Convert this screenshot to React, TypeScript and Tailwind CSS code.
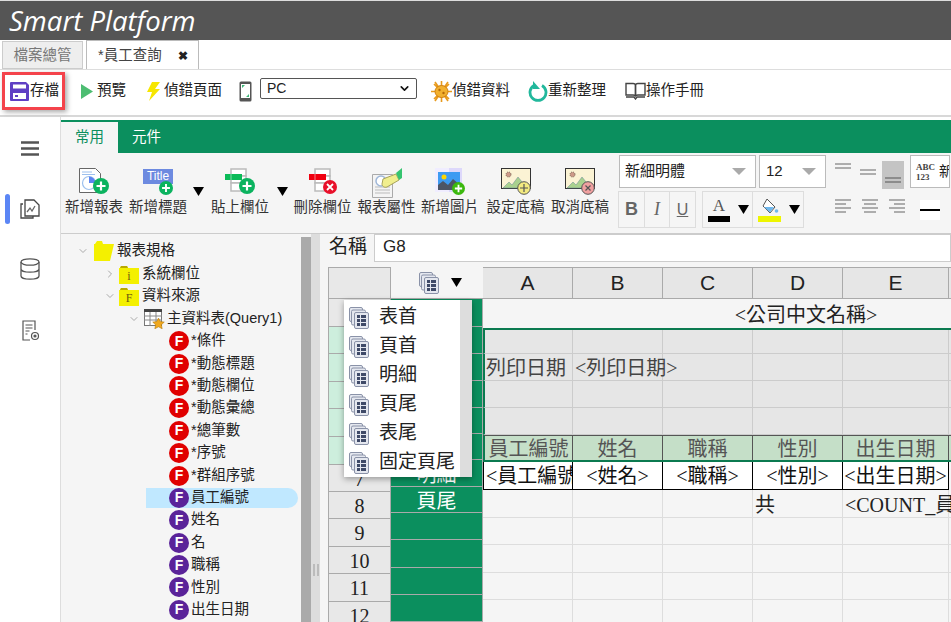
import { ChevronDown, ChevronRight } from "lucide-react";

const Arrow = () => (
  <svg width="11" height="9" viewBox="0 0 11 9"><path d="M0 0h11L5.5 9z" fill="#000" /></svg>
);

const SaveIcon = () => (
  <svg width="19" height="19" viewBox="0 0 19 19">
    <path d="M1 0h15l3 3v15a1 1 0 0 1-1 1H1a1 1 0 0 1-1-1V1a1 1 0 0 1 1-1z" fill="#5f3fc4" />
    <rect x="3" y="2.500" width="13" height="4" fill="#fff" />
    <rect x="3" y="11" width="13" height="6" fill="#fff" />
    <rect x="5" y="13" width="3" height="2" fill="#5f3fc4" />
  </svg>
);

const BugIcon = () => (
  <svg width="21" height="21" viewBox="0 0 21 21">
    <g stroke="#e89a1c" strokeWidth="1.6">
      <path d="M3 3l15 15M18 3L3 18M0 10.5h21M10.5 0v21M4 1l13 19M17 1L4 20" />
    </g>
    <ellipse cx="10.5" cy="10.5" rx="6.5" ry="6" fill="#f2b02e" stroke="#d07f10" />
    <circle cx="8.5" cy="9" r="1.2" fill="#b56a08" />
    <circle cx="12.5" cy="12" r="1.2" fill="#b56a08" />
  </svg>
);

const BookIcon = () => (
  <svg width="21" height="18" viewBox="0 0 21 18" fill="none" stroke="#444" strokeWidth="1.4">
    <path d="M1 1.5h7c1.5 0 2.5 1 2.5 2v11c0-1-1-1.5-2.5-1.5H1z" />
    <path d="M20 1.5h-7c-1.500 0-2.500 1-2.500 2v11c0-1 1-1.500 2.500-1.500h7z" />
    <path d="M1 15h8l1.500 2 1.500-2h8" />
  </svg>
);

const PlusBadge = ({ size = 16, fill = "#0bb35f" }: { size?: number; fill?: string }) => (
  <svg width={size} height={size} viewBox="0 0 16 16" className="absolute right-0 bottom-0">
    <circle cx="8" cy="8" r="8" fill={fill} />
    <path d="M8 3.500v9M3.500 8h9" stroke="#fff" strokeWidth="2.200" />
  </svg>
);

const CrossBadge = ({ fill = "#e8102a" }: { fill?: string }) => (
  <svg width="14" height="14" viewBox="0 0 14 14" className="absolute right-0 bottom-0">
    <circle cx="7" cy="7" r="7" fill={fill} />
    <path d="M4 4l6 6M10 4l-6 6" stroke="#fff" strokeWidth="1.800" />
  </svg>
);

const FieldBars = ({ color }: { color: string }) => (
  <svg width="22" height="25" viewBox="0 0 22 25" className="absolute left-0 top-0">
    <g fill="#fff" stroke="#bbb" strokeWidth="1.500">
      <rect x="6" y="1" width="15" height="7" />
      <rect x="6" y="8" width="15" height="7" />
      <rect x="6" y="15" width="15" height="8" />
    </g>
    <rect x="0" y="6" width="17" height="6" fill={color} />
    <path d="M6 6v6" stroke="#fff" strokeWidth="0.500" />
  </svg>
);

const NewReport = () => (
  <div className="relative w-[30px] h-[26px]">
    <svg width="22" height="25" viewBox="0 0 22 25" className="absolute left-0 top-0">
      <path d="M.5.500h16l5 5v19H.500z" fill="#fff" stroke="#666" />
      <path d="M3 4h10M3 6.500h13" stroke="#9cc0ee" />
      <circle cx="10" cy="15" r="6.500" fill="#fff" stroke="#9cc0ee" strokeWidth="1.200" />
      <path d="M10 8.500a6.500 6.500 0 0 1 6.500 6.500H10z" fill="#5b84f0" />
    </svg>
    <PlusBadge />
  </div>
);

const NewTitle = () => (
  <div className="relative w-[30px] h-[27px]">
    <span className="block w-[30px] h-[15px] mt-[1px] bg-[#6d8ae0] text-white text-[12px] leading-[15px] text-center">Title</span>
    <svg width="14" height="14" viewBox="0 0 16 16" className="absolute left-[16px] top-[13px]">
      <circle cx="8" cy="8" r="8" fill="#0bb35f" />
      <path d="M8 3.500v9M3.500 8h9" stroke="#fff" strokeWidth="2.200" />
    </svg>
  </div>
);

const PasteField = () => (
  <div className="relative w-[30px] h-[26px]">
    <FieldBars color="#0bbb58" />
    <PlusBadge />
  </div>
);

const DeleteField = () => (
  <div className="relative w-[28px] h-[26px]">
    <FieldBars color="#f00010" />
    <CrossBadge />
  </div>
);

const ReportProps = () => (
  <svg width="30" height="30" viewBox="0 0 30 30">
    <path d="M.5 6.500h20v23H.500z" fill="#f4f4f4" stroke="#aaa" />
    <path d="M3 19h15M3 22h15M3 25h15" stroke="#bbb" />
    <circle cx="9" cy="13" r="5" fill="#fff" stroke="#9fb7d8" strokeWidth="1.500" />
    <path d="M11 11l13-5 3 6-12 7c-3 1-5-1-5-3z" fill="#f0ee8e" stroke="#a8a35a" />
    <path d="M24 5l6-5v10l-3 2z" fill="#35c46f" />
  </svg>
);

const NewImage = () => (
  <div className="relative w-[30px] h-[27px]">
    <svg width="27" height="24" viewBox="0 0 27 24" className="absolute left-0 top-0">
      <rect x="0" y="0" width="27" height="24" fill="#f0edff" />
      <rect x="14" y="0" width="13" height="24" fill="#ddd8fb" />
      <rect x="3" y="4" width="22" height="18" fill="#3d9bf2" />
      <circle cx="9" cy="9" r="2.500" fill="#ffd600" />
      <path d="M3 22v-5l5-4 5 4 5-6 7 6v5z" fill="#4c5566" />
    </svg>
    <PlusBadge size={13} fill="#3cb80e" />
  </div>
);

const Sketch = ({ badge }: { badge: "plus" | "cross" }) => (
  <div className="relative w-[30px] h-[27px]">
    <svg width="30" height="24" viewBox="0 0 30 24" className="absolute left-0 top-0">
      <rect x=".5" y=".5" width="29" height="20" fill="#fbf3d4" stroke="#333" />
      <circle cx="7.500" cy="6.500" r="2.500" fill="#c98" stroke="#765" strokeDasharray="1 1" />
      <path d="M2 20l6-6 3 3 6-8 9 11z" fill="#a9d18e" stroke="#689" strokeWidth=".5" />
    </svg>
    <svg width="14" height="14" viewBox="0 0 14 14" className="absolute right-0 bottom-0">
      <circle cx="7" cy="7" r="6.300" fill={badge === "plus" ? "#f3ea80" : "#f0a0a0"} stroke="#555" />
      {badge === "plus" ? (
        <path d="M7 3v8M3 7h8" stroke="#555" strokeWidth="1.200" />
      ) : (
        <path d="M4.500 4.500l5 5M9.500 4.500l-5 5" stroke="#555" strokeWidth="1.200" />
      )}
    </svg>
  </div>
);

const Stacked = () => (
  <svg width="20" height="22" viewBox="0 0 20 22" className="shrink-0">
    <g fill="#e4e7ef" stroke="#8a92a8">
      <rect x=".5" y=".5" width="13" height="14" rx="1.500" />
      <rect x="2.500" y="3" width="14" height="15" rx="1.500" />
      <rect x="5.500" y="5.500" width="14" height="16" rx="1.500" />
    </g>
    <g fill="#3f4a68">
      <rect x="8" y="8" width="3" height="3" />
      <rect x="12" y="8" width="5" height="3" />
      <rect x="8" y="12" width="3" height="3" />
      <rect x="12" y="12" width="5" height="3" />
      <rect x="8" y="16" width="3" height="3" />
      <rect x="12" y="16" width="5" height="3" />
    </g>
  </svg>
);

const Fbadge = ({ red }: { red?: boolean }) => (
  <span className={`w-[20px] h-[20px] rounded-full shrink-0 flex items-center justify-center text-white text-[14px] font-bold ${red ? "bg-[#e00000]" : "bg-[#5a2399]"}`}>
    F
  </span>
);

const Folder = ({ label }: { label: string }) => (
  <span className="relative w-[20px] h-[20px] shrink-0 mr-[3px]">
    <svg width="20" height="20" viewBox="0 0 20 20" className="absolute left-0 top-0">
      <path d="M0 20V4h1l1-2h6l1 2h11v16z" fill="#f4f000" />
      <path d="M1 4l1-2h6l1 2z" fill="#b9a900" />
    </svg>
    <span className="absolute inset-0 pt-[4px] text-center text-[12px] leading-[16px] text-[#6b5a10] [font-family:'Liberation_Serif',serif]">{label}</span>
  </span>
);

const toolbarItems = [
  { label: "預覽", ml: "ml-[16px]", gap: "mr-[4px]", icon: <svg width="12" height="15" viewBox="0 0 12 15"><path d="M0 0l12 7.500L0 15z" fill="#4dbd72" /></svg> },
  { label: "偵錯頁面", ml: "ml-[21px]", gap: "mr-[4px]", icon: <svg width="13" height="19" viewBox="0 0 13 19"><path d="M5 0h8L8 7h5L2 19l3-9H0z" fill="#f6e600" /></svg> },
];

const tree = [
  { label: "*條件", red: true },
  { label: "*動態標題", red: true },
  { label: "*動態欄位", red: true },
  { label: "*動態彙總", red: true },
  { label: "*總筆數", red: true },
  { label: "*序號", red: true },
  { label: "*群組序號", red: true },
  { label: "員工編號", selected: true },
  { label: "姓名" },
  { label: "名" },
  { label: "職稱" },
  { label: "性別" },
  { label: "出生日期" },
];

const headerHeights = ["h-[28px]", "h-[27px]", "h-[28px]", "h-[27px]", "h-[28px]", "h-[28px]", "h-[27px]", "h-[27px]", "h-[28px]", "h-[27px]", "h-[28px]", "h-[27px]"];
const bandHeights = ["h-[28px]", "h-[27px]", "h-[27px]", "h-[27px]", "h-[26px]", "h-[26px]", "h-[27px]", "h-[26px]", "h-[27px]", "h-[28px]", "h-[27px]", "h-[27px]"];
const menuItems = ["表首", "頁首", "明細", "頁尾", "表尾", "固定頁尾"];
const dataCols = ["A", "B", "C", "D", "E", "F", "G"];
const dataWidths = ["w-[90px]", "w-[90px]", "w-[90px]", "w-[90px]", "w-[106px]", "w-[90px]", "w-[90px]"];

const GrayRow = ({ h, first, cells }: { h: string; first?: boolean; cells?: string[] }) => (
  <div className={`flex shrink-0 ${h} ${first ? "border-t-2 border-[#0b7a50]" : ""}`}>
    {dataWidths.map((w, i) => (
      <div key={i} className={`${w} shrink-0 bg-[#e6e6e6] border-r border-b border-[#ccc] flex items-center pt-[2px] whitespace-nowrap text-[#444] ${i === 0 ? "border-l-2 border-l-[#0b7a50] pl-[1px]" : "pl-[2px]"} ${i === 1 ? "relative z-10 overflow-visible" : ""}`}>
        {cells?.[i]}
      </div>
    ))}
  </div>
);

const headRow = ["員工編號", "姓名", "職稱", "性別", "出生日期"];
const detailRow = ["<員工編號>", "<姓名>", "<職稱>", "<性別>", "<出生日期>"];

export default function App() {
  return (
    <div className="w-[951px] h-[622px] overflow-hidden flex flex-col bg-white text-[#222] text-[14.5px] [font-family:'Liberation_Sans','Noto_Sans_CJK_TC',sans-serif]">
      {/* 標題列 */}
      <div className="h-[40px] shrink-0 border-t border-[#ddd] bg-[#555] pl-[9px] flex items-center">
        <span className="text-white italic text-[27.5px] leading-[38px] [font-family:'Open_Sans',sans-serif]">Smart Platform</span>
      </div>

      {/* 分頁 */}
      <div className="h-[30px] shrink-0 flex items-end pl-[2px] gap-[3px] border-b border-[#ddd]">
        <div className="w-[81px] h-[28px] pt-[2px] bg-[#eee] border border-[#ccc] flex items-center justify-center text-[#777]">檔案總管</div>
        <div className="w-[113px] h-[29px] pt-[2px] bg-white border border-b-0 border-[#bbb] flex items-center pl-[11px] text-[#444]">
          <span>*員工查詢</span>
          <span className="ml-[16px] text-[12px] font-bold text-[#222]">✖</span>
        </div>
      </div>

      {/* 工具列 */}
      <div className="h-[47px] shrink-0 flex items-start border-b-2 border-[#d8d8d8] text-[#222]">
        <div className="ml-[2px] mt-[2px] w-[63px] h-[38px] border-[3px] border-[#f4434b] shadow-[2px_2px_5px_rgba(0,0,0,0.35)] flex items-center pl-[5px]">
          <SaveIcon />
          <span className="ml-[1px]">存檔</span>
        </div>
        {toolbarItems.map((t) => (
          <div key={t.label} className={`h-[42px] flex items-center ${t.ml}`}>
            <span className={t.gap}>{t.icon}</span>
            <span>{t.label}</span>
          </div>
        ))}
        <div className="h-[42px] flex items-center ml-[17px]">
          <svg width="13" height="21" viewBox="0 0 13 21">
            <rect x=".5" y=".5" width="12" height="20" rx="1.500" fill="#555" />
            <rect x="2" y="3" width="9" height="14" fill="#fff" />
            <path d="M3 4h3L3 7zM10 16H7l3-3z" fill="#3cb878" />
          </svg>
        </div>
        <div className="mt-[8px] ml-[8px] w-[157px] h-[21px] rounded-[2px] border border-[#555] flex items-center justify-between pl-[6px] pr-[5px] text-[14px]">
          <span>PC</span>
          <ChevronDown size={13} strokeWidth={3} color="#111" />
        </div>
        <div className="h-[42px] flex items-center ml-[14px]">
          <BugIcon />
          <span>偵錯資料</span>
        </div>
        <div className="h-[42px] flex items-center ml-[18px]">
          <svg width="20" height="21" viewBox="0 0 20 21" fill="none">
            <path d="M6 4.500a8 8 0 1 0 8 0" stroke="#22b89c" strokeWidth="2.800" />
            <path d="M5 0v8h7z" fill="#22b89c" />
          </svg>
          <span>重新整理</span>
        </div>
        <div className="h-[42px] flex items-center ml-[19px]">
          <BookIcon />
          <span>操作手冊</span>
        </div>
      </div>

      {/* 主體 */}
      <div className="flex-1 min-h-0 flex">
        {/* 側欄 */}
        <div className="w-[61px] shrink-0 border-r border-[#ddd] flex flex-col items-center pt-[24px] relative">
          <svg width="18" height="15" viewBox="0 0 18 15"><path d="M0 1.500h18M0 7.500h18M0 13.500h18" stroke="#555" strokeWidth="2.400" /></svg>
          <div className="absolute left-[5px] top-[77px] w-[5px] h-[30px] rounded-full bg-[#5b86f5]" />
          <svg width="20" height="20" viewBox="0 0 20 20" fill="none" stroke="#444" strokeWidth="1.300" className="mt-[43px]">
            <path d="M3 5H1v14h12v-2" />
            <path d="M5 1h9l5 5v11H5z" fill="#fff" />
            <path d="M7 13l3-4 2 3 3-5" stroke="#666" />
          </svg>
          <svg width="20" height="22" viewBox="0 0 20 22" fill="none" stroke="#555" strokeWidth="1.300" className="mt-[39px]">
            <ellipse cx="10" cy="4" rx="9" ry="3.200" />
            <path d="M1 4v14c0 1.800 4 3.200 9 3.200s9-1.400 9-3.200V4M1 11c0 1.800 4 3.200 9 3.200s9-1.400 9-3.200" />
          </svg>
          <svg width="19" height="21" viewBox="0 0 19 21" fill="none" stroke="#555" strokeWidth="1.200" className="mt-[40px]">
            <path d="M9 20H2V1h12v9" />
            <path d="M4.500 5h7M4.500 8h7M4.500 11h4M4.500 14h2" />
            <circle cx="14" cy="16" r="3.500" />
            <circle cx="14" cy="16" r="1" fill="#555" />
          </svg>
        </div>

        <div className="flex-1 min-w-0 flex flex-col">
          {/* 綠色頁籤 */}
          <div className="mt-[3px] h-[33px] shrink-0 bg-[#0b8f5e] flex items-end">
            <div className="w-[57px] h-[31px] bg-[#f5f5f5] text-[#0b8f5e] flex items-center justify-center">常用</div>
            <div className="ml-[14px] h-[31px] text-white flex items-center">元件</div>
          </div>

          {/* 功能區 */}
          <div className="h-[81px] shrink-0 bg-[#f5f5f5] border-b border-[#ccc] flex items-start overflow-hidden">
            <div className="ml-[1px] flex items-start text-[#333]">
              {[
                { l: "新增報表", w: "w-[64px]", i: <NewReport /> },
                { l: "新增標題", w: "w-[64px]", i: <NewTitle /> },
                { arrow: true, w: "w-[16px]" },
                { l: "貼上欄位", w: "w-[68px]", i: <PasteField /> },
                { arrow: true, w: "w-[16px]" },
                { l: "刪除欄位", w: "w-[65px]", i: <DeleteField /> },
                { l: "報表屬性", w: "w-[63px]", i: <ReportProps /> },
                { l: "新增圖片", w: "w-[64px]", i: <NewImage /> },
                { l: "設定底稿", w: "w-[67px]", i: <Sketch badge="plus" /> },
                { l: "取消底稿", w: "w-[62px]", i: <Sketch badge="cross" /> },
              ].map((it, i) =>
                it.arrow ? (
                  <div key={i} className={`${it.w} flex justify-center pt-[34px]`}><Arrow /></div>
                ) : (
                  <div key={i} className={`${it.w} flex flex-col items-center pt-[15px]`}>
                    <div className="h-[29px] flex items-start">{it.i}</div>
                    <span className="leading-[20px] whitespace-nowrap">{it.l}</span>
                  </div>
                )
              )}
            </div>

            <div className="ml-[7px] pt-[2px] flex flex-col shrink-0">
              <div className="flex items-start">
                <div className="w-[137px] h-[33px] ml-[1px] bg-white border border-[#bbb] flex items-center justify-between pl-[5px] pr-[9px] text-[15px]">
                  <span>新細明體</span>
                  <svg width="14" height="7" viewBox="0 0 14 7"><path d="M0 0h14L7 7z" fill="#aaa" /></svg>
                </div>
                <div className="w-[67px] h-[33px] ml-[3px] bg-white border border-[#bbb] flex items-center justify-between pl-[6px] pr-[9px] text-[15px]">
                  <span>12</span>
                  <svg width="14" height="7" viewBox="0 0 14 7"><path d="M0 0h14L7 7z" fill="#aaa" /></svg>
                </div>
                <svg width="16" height="8" viewBox="0 0 16 8" className="ml-[9px] mt-[8px]"><path d="M0 1h16M0 5h16" stroke="#666" /></svg>
                <svg width="16" height="8" viewBox="0 0 16 8" className="ml-[9px] mt-[14px]"><path d="M0 1h16M0 5h16" stroke="#666" /></svg>
                <div className="ml-[6px] mt-[6px] w-[22px] h-[28px] bg-[#c4c4c4] flex items-end justify-center pb-[6px]">
                  <svg width="16" height="6" viewBox="0 0 16 6"><path d="M0 1h16M0 5h16" stroke="#555" /></svg>
                </div>
                <div className="ml-[6px] w-[40px] h-[33px] bg-white border border-[#bbb] flex items-center pl-[5px] text-[#222] overflow-hidden">
                  <span className="flex flex-col text-[9px] leading-[10px] font-bold text-[#444] [font-family:'Liberation_Serif',serif]">
                    <span>ABC</span>
                    <span>123</span>
                  </span>
                  <span className="ml-[4px] text-[14px]">新</span>
                </div>
              </div>
              <div className="flex items-start mt-[2px]">
                <div className="h-[37px] flex border border-[#ddd] text-[#666]">
                  <span className="w-[26px] flex items-center justify-center font-bold text-[18px] border-r border-[#ddd]">B</span>
                  <span className="w-[25px] flex items-center justify-center italic text-[18px] border-r border-[#ddd] [font-family:'Liberation_Serif',serif]">I</span>
                  <span className="w-[25px] flex items-center justify-center underline text-[16px]">U</span>
                </div>
                <div className="ml-[6px] h-[37px] flex border border-[#ddd]">
                  <div className="w-[50px] border-r border-[#ddd] flex items-center pl-[5px] gap-[8px]">
                    <div className="flex flex-col items-center w-[22px]">
                      <span className="text-[17px] leading-[18px] text-[#555] [font-family:'Liberation_Serif',serif]">A</span>
                      <span className="w-[22px] h-[6px] bg-black mt-[1px]" />
                    </div>
                    <Arrow />
                  </div>
                  <div className="w-[50px] flex items-center pl-[5px] gap-[8px]">
                    <div className="flex flex-col items-center w-[23px]">
                      <svg width="18" height="18" viewBox="0 0 18 18">
                        <path d="M6 1l8 8-5 6-7-7z" fill="#fff" stroke="#555" />
                        <path d="M3 9l10 0-4 5.500z" fill="#6fb8ee" />
                        <circle cx="15.500" cy="13" r="1.800" fill="#6fb8ee" />
                      </svg>
                      <span className="w-[23px] h-[6px] bg-[#eef500]" />
                    </div>
                    <Arrow />
                  </div>
                </div>
                {[0, 1, 2].map((k) => (
                  <svg key={k} width="16" height="16" viewBox="0 0 16 16" className={`mt-[8px] ${k === 0 ? "ml-[31px]" : "ml-[11px]"}`}>
                    <path
                      d={k === 0 ? "M0 1h16M0 5h11M0 9h16M0 13h11" : k === 1 ? "M0 1h16M2 5h12M0 9h16M2 13h12" : "M0 1h16M5 5h11M0 9h16M5 13h11"}
                      stroke="#666"
                      strokeWidth="1.200"
                    />
                  </svg>
                ))}
                <div className="ml-[15px] mt-[9px] w-[20px] h-[20px] bg-white flex items-center justify-center">
                  <span className="w-[20px] h-[2px] bg-black" />
                </div>
              </div>
            </div>
          </div>

          {/* 下半部 */}
          <div className="flex-1 min-h-0 flex">
            {/* 樹狀 */}
            <div className="w-[240px] shrink-0 bg-[#f5f5f5] pt-[6px] text-[#222] whitespace-nowrap">
              <div className="h-[22.5px] flex items-center pl-[16px]">
                <ChevronDown size={12} color="#aaa" className="mr-[5px]" />
                <svg width="20" height="20" viewBox="0 0 20 20" className="mr-[3px]"><path d="M0 20V3h1l2-3h5l1 3h11l-4 17z" fill="#f4f000" /></svg>
                <span>報表規格</span>
              </div>
              <div className="h-[22.5px] flex items-center pl-[43px]">
                <ChevronRight size={12} color="#aaa" className="mr-[3px]" />
                <Folder label="i" />
                <span>系統欄位</span>
              </div>
              <div className="h-[22.5px] flex items-center pl-[43px]">
                <ChevronDown size={12} color="#aaa" className="mr-[3px]" />
                <Folder label="F" />
                <span>資料來源</span>
              </div>
              <div className="h-[22.5px] flex items-center pl-[67px]">
                <ChevronDown size={12} color="#aaa" className="mr-[4px]" />
                <svg width="21" height="20" viewBox="0 0 21 20" className="mr-[2px]">
                  <rect x=".5" y=".5" width="17" height="16" fill="#fff" stroke="#777" />
                  <rect x="0" y="0" width="18" height="3" fill="#444" />
                  <path d="M0 7h18M0 11h18M6 3v14M12 3v14" stroke="#888" />
                  <path d="M14.500 9l1.800 3.600 4 .5-2.900 2.700.8 4-3.700-2-3.700 2 .8-4-2.900-2.700 4-.5z" fill="#f0a81e" stroke="#a87000" strokeWidth=".5" />
                </svg>
                <span>主資料表(Query1)</span>
              </div>
              {tree.map((t) => (
                <div key={t.label} className="h-[22.4px] flex items-center pl-[85px]">
                  <div className={`flex items-center h-[20px] w-[152px] pl-[23px] rounded-r-full ${t.selected ? "bg-[#c0e8ff]" : ""}`}>
                    <Fbadge red={t.red} />
                    <span className="ml-[2px]">{t.label}</span>
                  </div>
                </div>
              ))}
            </div>

            {/* 分隔條 */}
            <div className="w-[10px] shrink-0 bg-[#f5f5f5] pt-[3px]"><div className="h-full bg-[#aaa]" /></div>
            <div className="w-[9px] shrink-0 bg-[#ddd] flex items-end justify-center pb-[46px]">
              <svg width="6" height="12" viewBox="0 0 6 12"><path d="M1 0v12M5 0v12" stroke="#999" /></svg>
            </div>

            {/* 報表設計區 */}
            <div className="flex-1 min-w-0 bg-[#f5f5f5] pl-[8px] overflow-hidden text-[20px] [font-family:'Liberation_Serif','Noto_Sans_CJK_TC',serif]">
              <div className="h-[33px] flex items-start shrink-0">
                <span className="w-[46px] h-[28px] flex items-center pl-[1px] pb-[4px] text-[19px] leading-none">名稱</span>
                <div className="w-[577px] h-[28px] bg-white border border-[#ccc] flex items-center pl-[8px] pb-[3px] text-[17px] [font-family:'Liberation_Sans',sans-serif]">G8</div>
              </div>

              <div className="relative w-[851px]">
                {/* 欄標題 */}
                <div className="flex h-[32px]">
                  <div className="w-[63px] shrink-0 bg-[#e8e8e8] border-l border-t border-r border-b border-[#aaa]" />
                  <div className="w-[92px] shrink-0 border-b border-[#aaa] flex items-center pl-[28px] gap-[12px]">
                    <Stacked />
                    <Arrow />
                  </div>
                  {dataCols.map((c, i) => (
                    <div key={c} className={`${dataWidths[i]} shrink-0 bg-[#e6e6e6] border-t border-r border-b border-[#aaa] flex items-center justify-center text-[#222] text-[21px] [font-family:'Liberation_Sans',sans-serif]`}>{c}</div>
                  ))}
                </div>

                <div className="flex">
                  {/* 列號 */}
                  <div className="w-[63px] shrink-0 flex flex-col">
                    {headerHeights.map((h, i) => (
                      <div key={i} className={`${h} shrink-0 border-l border-r border-b border-[#aaa] flex items-center justify-center pt-[1px] ${i >= 1 && i <= 5 ? "bg-[#cdeedd]" : "bg-[#e8e8e8]"}`}>{i + 1}</div>
                    ))}
                  </div>
                  {/* 區段 */}
                  <div className="w-[92px] shrink-0 flex flex-col bg-[#0b8f5e] text-white border-r border-[#aaa]">
                    {bandHeights.map((h, i) => (
                      <div key={i} className={`${h} shrink-0 border-b border-[#aaa] flex items-center justify-center pt-[3px]`}>
                        {i === 6 ? "明細" : i === 7 ? "頁尾" : ""}
                      </div>
                    ))}
                  </div>
                  {/* 資料 */}
                  <div className="flex flex-col">
                    <div className="h-[29px] shrink-0 pt-[2px] flex items-center justify-center text-[#222] w-[646px]">&lt;公司中文名稱&gt;</div>
                    <GrayRow h="h-[26px]" first />
                    <GrayRow h="h-[27px]" cells={["列印日期", "<列印日期>"]} />
                    <GrayRow h="h-[27px]" />
                    <GrayRow h="h-[27px]" />
                    <div className="flex h-[27px] shrink-0 border-b-2 border-[#0b7a50]">
                      {dataWidths.map((w, i) => (
                        <div key={i} className={`${w} shrink-0 bg-[#c5dfc8] border-t border-r border-[#555] flex items-center justify-center pt-[2px] overflow-hidden whitespace-nowrap text-[#555] ${i === 0 ? "border-l-2 border-l-[#0b7a50]" : ""}`}>{headRow[i]}</div>
                      ))}
                    </div>
                    <div className="flex h-[28px] shrink-0">
                      {dataWidths.map((w, i) => (
                        <div key={i} className={`${w} shrink-0 flex items-center pt-[1px] overflow-hidden whitespace-nowrap text-[#111] ${i < 5 ? "border-r border-b border-black bg-white justify-center" : ""} ${i === 0 ? "border-l border-l-black justify-start pl-[2px]" : ""}`}>{detailRow[i]}</div>
                      ))}
                    </div>
                    {[0, 1, 2, 3, 4].map((r) => (
                      <div key={r} className="flex h-[27.5px] shrink-0">
                        {dataWidths.map((w, i) => (
                          <div key={i} className={`${w} shrink-0 border-r border-b border-[#ddd] flex items-center whitespace-nowrap pl-[2px] pt-[3px] text-[#222]`}>
                            {r === 0 && i === 3 ? "共" : r === 0 && i === 4 ? "<COUNT_員工編號>" : ""}
                          </div>
                        ))}
                      </div>
                    ))}
                  </div>
                </div>

                {/* 下拉選單 */}
                <div className="absolute z-20 left-[16px] top-[33px] w-[128px] h-[177px] flex bg-[#ddd] shadow-[0_2px_6px_rgba(0,0,0,0.35)]">
                  <div className="w-[116px] bg-white flex flex-col pt-[3px]">
                    {menuItems.map((m) => (
                      <div key={m} className="h-[29.6px] flex items-center pl-[5px] gap-[10px] text-[19px] text-[#222] whitespace-nowrap">
                        <Stacked />
                        <span>{m}</span>
                      </div>
                    ))}
                  </div>
                </div>
              </div>
            </div>
          </div>
        </div>
      </div>
    </div>
  );
}
